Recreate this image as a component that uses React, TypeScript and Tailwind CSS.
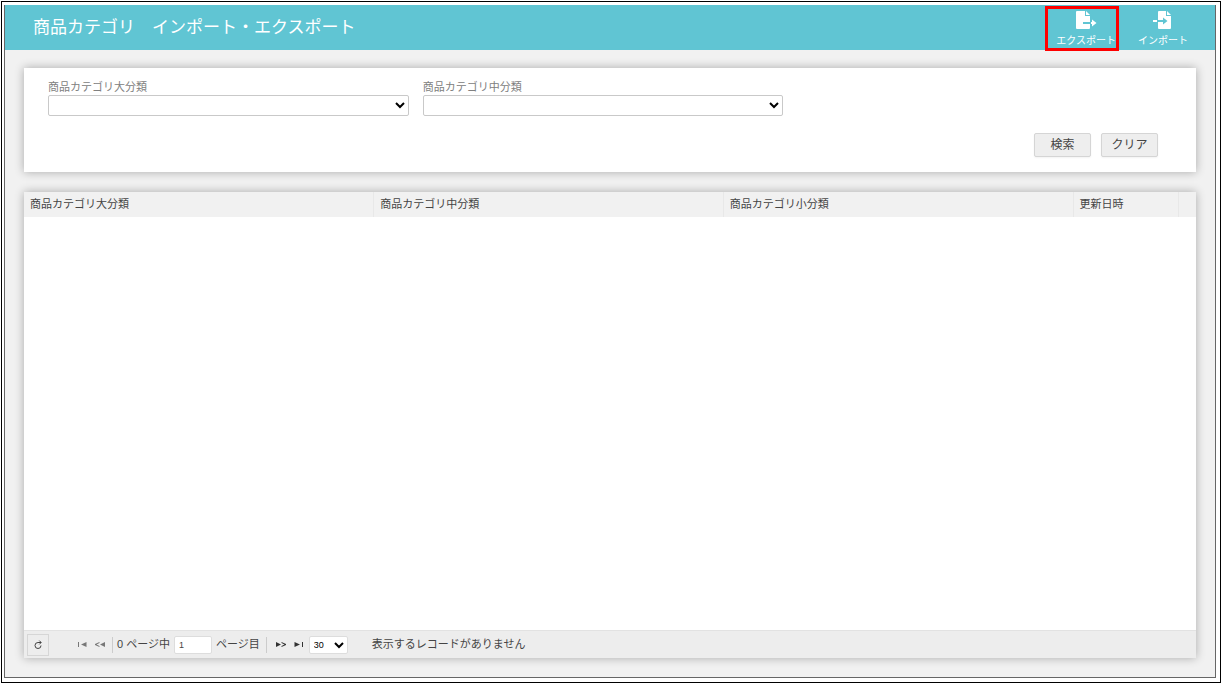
const columns = ['商品カテゴリ大分類', '商品カテゴリ中分類', '商品カテゴリ小分類', '更新日時', ''];
const filters = [
  { id: 'large', label: '商品カテゴリ大分類' },
  { id: 'middle', label: '商品カテゴリ中分類' },
];

function ExportIcon() {
  return (
    <svg viewBox="0 0 22 18" className="h-[18px] w-[22px]">
      <path fill="#fff" d="M2 0h8v5h5v12q0 1-1 1H2q-1 0-1-1V1q0-1 1-1zM11 0l4 4h-4z" />
      <path fill="#60c5d3" d="M8 11h7v2H8z" />
      <path fill="#fff" d="M16 11h1V8.500l4.500 3.500-4.500 3.500V13h-1z" />
    </svg>
  );
}

function ImportIcon() {
  return (
    <svg viewBox="0 0 22 18" className="h-[18px] w-[22px]">
      <path fill="#fff" d="M7 0h7v5h5v12q0 1-1 1H7q-1 0-1-1V1q0-1 1-1zM15 0l4 4h-4zM1 9h4v2H1z" />
      <path fill="#60c5d3" d="M6 9h5V6.500l4.500 3.500-4.500 3.500V11H6z" />
    </svg>
  );
}

function Header() {
  return (
    <header className="flex h-[45px] items-center justify-between bg-[#60c5d3] pr-[27px] pl-7 text-white">
      <h1 className="text-[17px] leading-6">商品カテゴリ　インポート・エクスポート</h1>
      <nav className="flex gap-[22px] self-start pt-[6px]">
        <button type="button" className="relative flex flex-col items-center gap-[6px] text-[10px] leading-3">
          <ExportIcon />
          エクスポート
          <span className="absolute -top-[5px] -right-[3px] -bottom-1 -left-[11px] border-[3px] border-[#fe0000]" />
        </button>
        <button type="button" className="flex flex-col items-center gap-[6px] text-[10px] leading-3">
          <ImportIcon />
          インポート
        </button>
      </nav>
    </header>
  );
}

function SearchPanel() {
  return (
    <form className="bg-white pt-3 pr-[38px] pb-[15px] pl-6 shadow-[0_0_9px_rgba(0,0,0,0.3)]">
      <div className="grid grid-cols-3 gap-[14px]">
        {filters.map((filter) => (
          <div key={filter.id}>
            <label htmlFor={filter.id} className="block text-[11px] leading-[15px] text-[#808080]">
              {filter.label}
            </label>
            <select id={filter.id} className="block h-[21px] w-full rounded-xs border border-[#c9c9c9] bg-white text-[11px] text-black" />
          </div>
        ))}
      </div>
      <div className="mt-[17px] flex justify-end gap-[10px] text-[12px] text-[#444]">
        <button type="submit" className="h-6 w-[57px] rounded-xs border border-[#d5d5d5] bg-[#eee] shadow-xs">検索</button>
        <button type="reset" className="h-6 w-[57px] rounded-xs border border-[#d5d5d5] bg-[#eee] shadow-xs">クリア</button>
      </div>
    </form>
  );
}

function Pager() {
  return (
    <footer className="flex h-7 items-center border-t border-[#e2e2e2] bg-[#ededed] text-[11px] text-[#444]">
      <button type="button" aria-label="再読み込み" className="ml-[3px] flex h-[22px] w-[22px] items-center justify-center border border-[#d6d6d6]">
        <svg viewBox="0 0 10 10" className="h-[10px] w-[10px]" fill="none" stroke="#444">
          <path d="M8 5.5A3 3 0 1 1 5 2.5H8M6.3.6 8.2 2.5 6.3 4.4" />
        </svg>
      </button>
      <button type="button" aria-label="最初のページ" className="ml-[29px]">
        <svg viewBox="0 0 9 7" className="h-[7px] w-[9px]" fill="#777">
          <path d="M0 1h1v5H0zM8.500 1v5L3 3.500z" />
        </svg>
      </button>
      <button type="button" aria-label="前のページ" className="ml-2">
        <svg viewBox="0 0 11 7" className="h-[7px] w-[11px]" fill="#777">
          <path d="M10 1v5L5 3.500zM4.500 1v1L1.500 3.500l3 1.500v1L0 3.900v-.8z" />
        </svg>
      </button>
      <span className="mr-1 ml-[6px] h-4 w-px bg-[#ccc]" />
      <label htmlFor="page">0 ページ中</label>
      <input id="page" defaultValue="1" className="ml-1 h-[18px] w-[38px] rounded-xs border border-[#ddd] bg-white px-1 text-[9px]" />
      <span className="ml-1">ページ目</span>
      <span className="ml-[6px] h-4 w-px bg-[#ccc]" />
      <button type="button" aria-label="次のページ" className="ml-2">
        <svg viewBox="0 0 11 7" className="h-[7px] w-[11px]" fill="#333">
          <path d="M1 1v5l5-2.500zM6.500 1v1l3 1.500-3 1.500v1L11 3.900v-.8z" />
        </svg>
      </button>
      <button type="button" aria-label="最後のページ" className="ml-2">
        <svg viewBox="0 0 9 7" className="h-[7px] w-[9px]" fill="#333">
          <path d="M8 1h1v5H8zM.5 1v5L6 3.500z" />
        </svg>
      </button>
      <select aria-label="表示件数" className="ml-[6px] h-[18px] w-[39px] rounded-xs border border-[#ddd] bg-white text-[9px] text-black">
        <option>30</option>
      </select>
      <span className="ml-6">表示するレコードがありません</span>
    </footer>
  );
}

function CategoryGrid() {
  return (
    <section className="flex flex-1 flex-col bg-white shadow-[0_0_9px_rgba(0,0,0,0.3)]">
      <div className="flex-1">
        <table className="w-full table-fixed">
          <colgroup>
            <col />
            <col />
            <col />
            <col className="w-[105px]" />
            <col className="w-[18px]" />
          </colgroup>
          <thead>
            <tr className="h-[25px] bg-[#f1f1f1] text-left text-[11px] leading-4 text-[#444]">
              {columns.map((name) => (
                <th key={name} className="border-r border-[#e8e8e8] px-[6px] pb-[2px] font-normal last:border-r-0">
                  {name}
                </th>
              ))}
            </tr>
          </thead>
        </table>
      </div>
      <Pager />
    </section>
  );
}

export default function App() {
  return (
    <div className="flex min-h-screen bg-white pt-px pl-px font-['Liberation_Sans','Noto_Sans_CJK_JP',sans-serif]">
      <div className="flex flex-1 border border-black pt-[3px] pr-1 pb-1 pl-[2px]">
        <div className="flex flex-1 flex-col border border-t-0 border-[#666] bg-[#f1f1f1]">
          <Header />
          <main className="flex flex-1 flex-col gap-5 px-[19px] pt-[18px] pb-[19px]">
            <SearchPanel />
            <CategoryGrid />
          </main>
        </div>
      </div>
    </div>
  );
}
